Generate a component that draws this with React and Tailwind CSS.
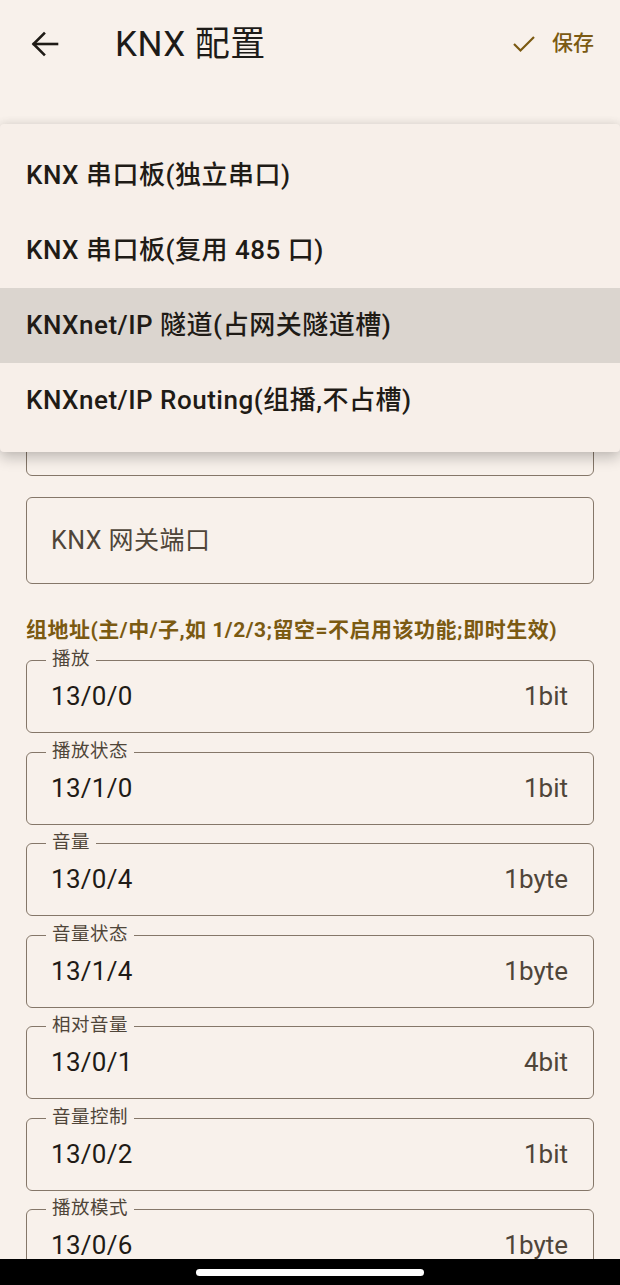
import React from "react";

const fields = [
  { label: "播放", value: "13/0/0", unit: "1bit" },
  { label: "播放状态", value: "13/1/0", unit: "1bit" },
  { label: "音量", value: "13/0/4", unit: "1byte" },
  { label: "音量状态", value: "13/1/4", unit: "1byte" },
  { label: "相对音量", value: "13/0/1", unit: "4bit" },
  { label: "音量控制", value: "13/0/2", unit: "1bit" },
  { label: "播放模式", value: "13/0/6", unit: "1byte" },
];

const menuItems = [
  "KNX 串口板(独立串口)",
  "KNX 串口板(复用 485 口)",
  "KNXnet/IP 隧道(占网关隧道槽)",
  "KNXnet/IP Routing(组播,不占槽)",
];

function PlainField({ text }) {
  return (
    <div className="h-[87px] rounded-[6px] border-[1.5px] border-[#857769] flex items-center pl-[24px]">
      {text ? (
        <span className="text-[25px] tracking-[0.5px] text-[#4f4539]">{text}</span>
      ) : null}
    </div>
  );
}

function LabeledField({ label, value, unit }) {
  return (
    <div className="relative h-[73px] rounded-[6px] border-[1.5px] border-[#857769] flex items-center justify-between pl-[24px] pr-[25px]">
      <span className="absolute left-[19px] top-[-14px] px-[6px] bg-[#f8f1eb] text-[18.5px] leading-[24px] tracking-[0.5px] text-[#4f4539]">
        {label}
      </span>
      <span className="text-[26px] tracking-[0.3px] text-[#1f1b16]">{value}</span>
      <span className="text-[26px] text-[#4f4539]">{unit}</span>
    </div>
  );
}

export default function App() {
  return (
    <div className="relative h-[1285px] w-[620px] overflow-hidden bg-[#f8f1eb] font-['Roboto','Noto_Sans_CJK_SC',sans-serif]">
      {/* Header */}
      <div className="h-[88px] flex items-center">
        <div className="w-[115px] flex items-center pl-[31px]">
          <svg width="28" height="26" viewBox="0 0 28 26" fill="none" stroke="#1f1b16" strokeWidth="2.6" strokeLinecap="square">
            <line x1="3" y1="13" x2="26" y2="13" />
            <polyline points="13,2.5 2.5,13 13,23.5" strokeLinejoin="miter" />
          </svg>
        </div>
        <div className="flex-1 text-[35px] leading-none tracking-[0.5px] text-[#1d1b18]">KNX 配置</div>
        <div className="flex items-center gap-[16px] pr-[26px] text-[#7b5a12]">
          <svg width="24" height="18" viewBox="0 0 24 18" fill="none" stroke="#7b5a12" strokeWidth="2.2">
            <polyline points="2,9 8.5,15.5 22,2" />
          </svg>
          <span className="text-[21px] font-medium">保存</span>
        </div>
      </div>

      {/* Content */}
      <div className="px-[26px] pt-[85px]">
        <div className="flex flex-col gap-[21px]">
          <PlainField />
          <PlainField />
          <PlainField />
          <PlainField text="KNX 网关端口" />
        </div>
        <div className="mt-[33px] h-[28px] flex items-center text-[21px] font-bold tracking-[0.5px] text-[#7b5a12] whitespace-nowrap">
          组地址(主/中/子,如 1/2/3;留空=不启用该功能;即时生效)
        </div>
        <div className="mt-[15px] flex flex-col gap-[18.5px]">
          {fields.map((f) => (
            <LabeledField key={f.label} {...f} />
          ))}
        </div>
      </div>

      {/* Dropdown menu */}
      <div className="absolute left-0 right-0 top-[124px] py-[14px] rounded-[4px] bg-[#f7efe9] shadow-[0_6px_14px_rgba(0,0,0,0.22),0_-2px_8px_rgba(0,0,0,0.06)]">
        {menuItems.map((m, i) => (
          <div
            key={m}
            className={
              i === 2
                ? "h-[75px] flex items-center pl-[26px] bg-[#dbd5cf] text-[26px] font-medium tracking-[0.5px] text-[#1f1b16]"
                : "h-[75px] flex items-center pl-[26px] text-[26px] font-medium tracking-[0.5px] text-[#1f1b16]"
            }
          >
            {m}
          </div>
        ))}
      </div>

      {/* Navigation bar */}
      <div className="absolute left-0 right-0 bottom-0 h-[26px] bg-black flex items-center justify-center">
        <div className="w-[228px] h-[7px] rounded-full bg-white" />
      </div>
    </div>
  );
}
